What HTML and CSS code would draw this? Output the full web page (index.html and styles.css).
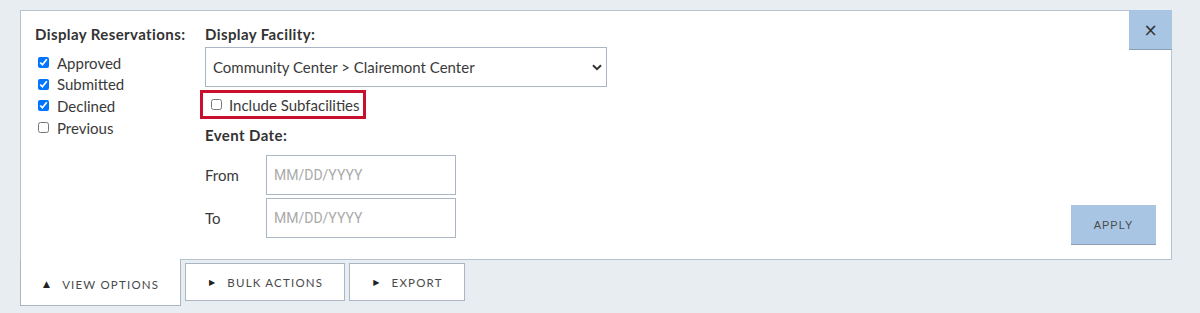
FILE: index.html
```html
<!DOCTYPE html>
<html lang="en">
<head>
  <meta charset="UTF-8" />
  <meta name="viewport" content="width=device-width,initial-scale=1.0">
  <title>Reservations</title>
  <link rel="stylesheet" href="styles.css">
</head>
<body>
  <div class="wrap">
    <div class="panel">
      <button class="close" title="Close">&times;</button>

      <div class="col-status">
        <div class="heading">Display Reservations:</div>
        <label class="check"><input type="checkbox" checked> Approved</label>
        <label class="check"><input type="checkbox" checked> Submitted</label>
        <label class="check"><input type="checkbox" checked> Declined</label>
        <label class="check"><input type="checkbox"> Previous</label>
      </div>

      <div class="col-filters">
        <div class="heading">Display Facility:</div>
        <div class="select-box">
          <select class="facility">
            <option>Community Center &gt; Clairemont Center</option>
          </select>
          <svg class="chevron" width="10" height="7" viewBox="0 0 10 7"><path d="M1 1.2 L5 5.2 L9 1.2" fill="none" stroke="#333" stroke-width="2"/></svg>
        </div>
        <label class="subfac"><input type="checkbox"> Include Subfacilities</label>

        <div class="heading date-heading">Event Date:</div>
        <div class="date-row first">
          <span class="date-label">From</span>
          <input class="date" type="text" placeholder="MM/DD/YYYY">
        </div>
        <div class="date-row">
          <span class="date-label">To</span>
          <input class="date" type="text" placeholder="MM/DD/YYYY">
        </div>
      </div>

      <div class="col-apply">
        <button class="apply">APPLY</button>
      </div>
    </div>

    <div class="tabs">
      <div class="tab active"><span class="arrow">&#9650;</span>VIEW OPTIONS</div>
      <div class="tab"><span class="arrow">&#9654;</span>BULK ACTIONS</div>
      <div class="tab"><span class="arrow">&#9654;</span>EXPORT</div>
    </div>
  </div>
</body>
</html>
```

FILE: styles.css
```css
html, body {
  margin: 0;
  padding: 0;
  background-color: #e8edf2;
  font-family: Lato, "Open Sans", sans-serif;
  font-size: 15px;
  color: #3a3a3a;
}

.wrap {
  padding: 10px 28px 0 20px;
}

.panel {
  position: relative;
  display: flex;
  height: 248px;
  background: #fff;
  border: 1px solid #b6c3d1;
}

.close {
  position: absolute;
  top: -1px;
  right: -1px;
  width: 43px;
  height: 40px;
  padding: 0;
  border: none;
  border-bottom: 1px solid #8c9fb4;
  background: #a8c6e4;
  color: #333;
  font-family: "DejaVu Sans", sans-serif;
  font-size: 17px;
  line-height: 38px;
  cursor: pointer;
}

.heading {
  font-weight: bold;
  font-size: 15px;
  letter-spacing: 0.4px;
  color: #333;
  line-height: 20px;
}

.col-status {
  width: 170px;
  padding: 13px 0 0 14px;
}

.col-status .heading {
  margin-bottom: 8px;
}

.check {
  display: flex;
  align-items: center;
  height: 21.6px;
}

.check input {
  margin: 0 8px 0 3px;
  width: 11px;
  height: 11px;
}

.col-filters {
  flex: 1;
  padding-top: 13px;
}

.select-box {
  position: relative;
  width: 402px;
  margin-top: 3px;
}

.facility {
  appearance: none;
  width: 100%;
  height: 40px;
  padding: 0 7px;
  border: 1px solid #aab6c3;
  border-radius: 0;
  background: #fff;
  color: #3a3a3a;
  font-family: Lato, "Open Sans", sans-serif;
  font-size: 15px;
}

.chevron {
  position: absolute;
  right: 5px;
  top: 17px;
}

.subfac {
  display: inline-flex;
  align-items: center;
  margin: 3px 0 0 -5px;
  height: 23px;
  padding: 0 3px 0 4px;
  border: 3px solid #c8102e;
}

.subfac input {
  margin: 0 7px 0 4px;
  width: 11px;
  height: 11px;
}

.date-heading {
  margin-top: 6px;
}

.date-row {
  display: flex;
  align-items: center;
  margin-top: 3px;
}

.date-row.first {
  margin-top: 10px;
}

.date-label {
  width: 61px;
}

.date {
  box-sizing: border-box;
  width: 190px;
  height: 40px;
  padding: 0 7px;
  border: 1px solid #aab6c3;
  border-radius: 0;
  font-family: Roboto, sans-serif;
  font-size: 14px;
}

.date::placeholder {
  color: #aaa;
}

.col-apply {
  display: flex;
  align-items: flex-end;
  padding: 0 15px 14px 0;
}

.apply {
  width: 85px;
  height: 40px;
  border: none;
  border-bottom: 1px solid #8c9fb4;
  background: #a8c6e4;
  color: #4a4a4a;
  font-family: "Liberation Sans", Arial, sans-serif;
  font-size: 11px;
  letter-spacing: 1px;
  cursor: pointer;
}

.tabs {
  display: flex;
  align-items: flex-start;
  gap: 4px;
}

.tab {
  display: flex;
  align-items: center;
  height: 36px;
  margin-top: 3px;
  padding: 0 21px 0 23px;
  border: 1px solid #aab6c3;
  background: #fff;
  color: #4a4a4a;
  font-size: 11.5px;
  letter-spacing: 1.2px;
  white-space: nowrap;
}

.tab .arrow {
  font-family: "DejaVu Sans", sans-serif;
  font-size: 8px;
  color: #222;
  margin-right: 11px;
}

.tab.active {
  box-sizing: border-box;
  width: 161px;
  height: 47px;
  margin-top: -1px;
  padding: 4px 0 0 22px;
  border-top: none;
  position: relative;
  z-index: 1;
}

.tab.active .arrow {
  font-size: 9px;
}
```
